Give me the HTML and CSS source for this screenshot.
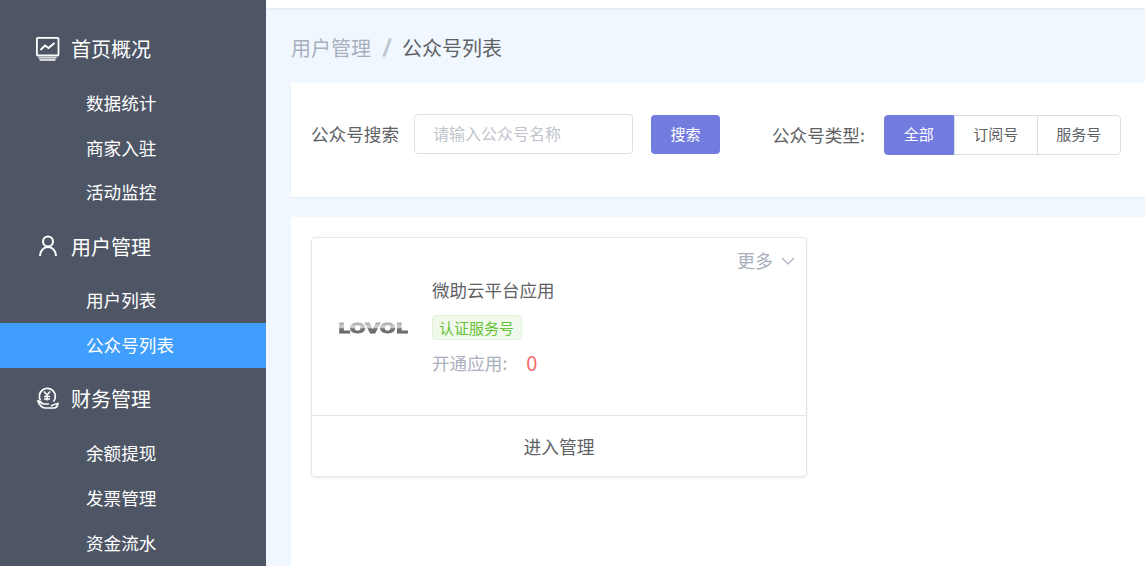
FILE: index.html
```html
<!DOCTYPE html>
<html lang="zh-CN">
<head>
<meta charset="utf-8">
<title>公众号列表</title>
<link rel="stylesheet" href="styles.css">
</head>
<body>
<div class="app">
  <aside class="sidebar">
    <div class="group-title">
      <svg class="nav-icon" viewBox="0 0 24 24" fill="none" stroke="#fff" stroke-width="1.8"><rect x="0.900" y="0.900" width="21.600" height="17.600" rx="1"/><path d="M4.500 13l4.500-4.500 3.500 2.500 6-5" stroke-width="1.900"/><path d="M2.500 20.900h18M3.500 23h16" stroke-width="1.300"/></svg>
      <span>首页概况</span>
    </div>
    <a class="sub">数据统计</a>
    <a class="sub">商家入驻</a>
    <a class="sub">活动监控</a>
    <div class="group-title">
      <svg class="nav-icon" viewBox="0 0 24 24" fill="none" stroke="#fff" stroke-width="2"><circle cx="12" cy="7.500" r="5"/><path d="M4 22c0-5 3.500-9 8-9s8 4 8 9"/></svg>
      <span>用户管理</span>
    </div>
    <a class="sub">用户列表</a>
    <a class="sub active">公众号列表</a>
    <div class="group-title">
      <svg class="nav-icon" viewBox="0 0 24 24" fill="none" stroke="#fff" stroke-width="1.700"><path d="M4.500 13.500A8 8 0 1 1 17.500 14.500"/><path d="M1.500 13.500c2.500 0 4 3.500 6.500 3.500h5M1.500 13.500C3 17 5 21 9 21h9c2 0 3.500-2 4-4.500-2 0-4 1-7 2.500"/><path d="M8 4.500l3 3.500 3-3.500M11 8v5.500M8 9.500h6M8 12h6" stroke-width="1.500"/></svg>
      <span>财务管理</span>
    </div>
    <a class="sub">余额提现</a>
    <a class="sub">发票管理</a>
    <a class="sub">资金流水</a>
  </aside>

  <div class="content">
    <div class="topbar"></div>
    <main class="main">
      <nav class="crumbs">
        <span class="crumb-parent">用户管理</span>
        <span class="crumb-sep">/</span>
        <span class="crumb-current">公众号列表</span>
      </nav>

      <section class="search-panel">
        <label class="field-label">公众号搜索</label>
        <div class="input">请输入公众号名称</div>
        <button class="search-btn">搜索</button>
        <label class="type-label">公众号类型:</label>
        <div class="type-group">
          <span class="type-opt selected">全部</span>
          <span class="type-opt">订阅号</span>
          <span class="type-opt">服务号</span>
        </div>
      </section>

      <section class="list-panel">
        <article class="card">
          <div class="card-body">
            <div class="more">
              <span>更多</span>
              <svg class="chevron" viewBox="0 0 14 8" fill="none" stroke="#a9b0bd" stroke-width="1.200"><path d="M1 1l6 6 6-6"/></svg>
            </div>
            <div class="logo">
              <svg viewBox="0 0 72 14" width="72" height="14">
                <defs>
                  <linearGradient id="chrome" x1="0" y1="0" x2="0" y2="1">
                    <stop offset="0" stop-color="#8a8a8a"/>
                    <stop offset="0.45" stop-color="#d6d6d6"/>
                    <stop offset="0.55" stop-color="#777"/>
                    <stop offset="1" stop-color="#5c5c5c"/>
                  </linearGradient>
                </defs>
                <text class="logo-text" x="36" y="12" text-anchor="middle" textLength="70" lengthAdjust="spacingAndGlyphs" fill="url(#chrome)" stroke="url(#chrome)" stroke-width="0.800">LOVOL</text>
              </svg>
            </div>
            <div class="info">
              <div class="name">微助云平台应用</div>
              <span class="tag">认证服务号</span>
              <div class="apps"><span class="apps-label">开通应用:</span><span class="apps-count">0</span></div>
            </div>
          </div>
          <div class="card-foot">进入管理</div>
        </article>
      </section>
    </main>
  </div>
</div>
</body>
</html>
```

FILE: styles.css
```css
* { box-sizing: border-box; }
html, body { margin: 0; height: 100%; overflow: hidden; }
body {
  font-family: "Noto Sans CJK SC", "Noto Sans", sans-serif;
  background: #f0f7ff;
  color: #606266;
}
.app { display: flex; height: 566px; }

.sidebar {
  width: 266px;
  flex: none;
  background: #4e5666;
  padding-top: 17.5px;
  overflow: hidden;
  color: #fff;
}
.group-title {
  display: flex;
  align-items: center;
  height: 63.25px;
  padding: 0 0 1px 36px;
  font-size: 20px;
  gap: 11px;
}
.nav-icon { width: 24px; height: 24px; flex: none; }
.sub {
  display: flex;
  align-items: center;
  height: 44.75px;
  padding: 0 0 1.5px 86px;
  font-size: 17.6px;
}
.sub.active { background: #409eff; padding-bottom: 1px; }

.content { flex: 1; min-width: 0; display: flex; flex-direction: column; }
.topbar {
  height: 8px;
  background: #fff;
  box-shadow: 0 1px 3px rgba(0, 0, 0, 0.08);
  flex: none;
}
.main {
  flex: 1;
  display: flex;
  flex-direction: column;
  padding-left: 25px;
  min-height: 0;
}
.crumbs {
  height: 75px;
  flex: none;
  display: flex;
  align-items: center;
  padding-top: 4px;
  font-size: 20px;
}
.crumb-parent { color: #a9b0bd; }
.crumb-sep {
  display: inline-block;
  color: #c0c4cc;
  font-family: "Liberation Sans", sans-serif;
  font-weight: 700;
  font-size: 24px;
  line-height: 1;
  margin: 0 11px;
  width: 10px;
  text-align: center;
  transform: skewX(-10deg);
}
.crumb-current { color: #606266; margin-left: -1px; }

.search-panel {
  height: 114px;
  flex: none;
  background: #fff;
  box-shadow: 0 1px 2px rgba(0, 0, 0, 0.05);
  display: flex;
  align-items: flex-start;
  padding: 31px 0 0 20px;
}
.field-label, .type-label {
  font-size: 17.6px;
  line-height: 39px;
  color: #606266;
}
.input {
  width: 219px;
  height: 40px;
  margin-left: 15px;
  padding-left: 18px;
  border: 1px solid #dcdfe6;
  border-radius: 4px;
  font-size: 16px;
  line-height: 36px;
  color: #c0c4cc;
}
.search-btn {
  width: 69px;
  height: 39px;
  margin: 1px 0 0 18px;
  border: 0;
  border-radius: 4px;
  background: #727cdf;
  color: #fff;
  font: inherit;
  font-size: 15px;
  padding: 0 0 2px;
}
.type-label { margin-left: 52px; line-height: 42px; }
.type-group {
  display: flex;
  height: 40px;
  margin-left: 19px;
  margin-top: 1px;
}
.type-opt {
  height: 40px;
  width: 84px;
  border: 1px solid #dcdfe6;
  font-size: 15px;
  line-height: 36px;
  text-align: center;
  color: #606266;
}
.type-opt:last-child { margin-left: -1px; border-radius: 0 4px 4px 0; }
.type-opt.selected {
  width: 70px;
  background: #727cdf;
  border-color: #727cdf;
  color: #fff;
  border-radius: 4px 0 0 4px;
}

.list-panel {
  flex: 1;
  margin-top: 20px;
  background: #fff;
  padding: 20px;
}
.card {
  width: 496px;
  height: 240px;
  background: #fff;
  border: 1px solid #e4e7ed;
  border-radius: 4px;
  box-shadow: 0 1px 3px rgba(0, 0, 0, 0.08);
  display: flex;
  flex-direction: column;
}
.card-body {
  position: relative;
  height: 178px;
  flex: none;
  display: flex;
  align-items: flex-start;
  border-bottom: 1px solid #e4e7ed;
}
.more {
  position: absolute;
  top: 9px;
  right: 11px;
  display: flex;
  align-items: center;
  gap: 8px;
  font-size: 18px;
  color: #a9b0bd;
}
.chevron { width: 14px; height: 8px; margin-top: 2px; }
.logo { width: 72px; height: 14px; margin: 83px 0 0 25px; flex: none; }
.logo svg { display: block; filter: blur(0.3px); }
.logo-text {
  font-family: "DejaVu Sans", sans-serif;
  font-weight: 700;
  font-size: 14px;
}
.info { margin-left: 23px; padding-top: 37px; }
.name { font-size: 17.5px; line-height: 30px; color: #606266; }
.tag {
  display: inline-block;
  height: 25px;
  margin-top: 10px;
  padding: 0 7px 0 6px;
  border: 1px solid #e1f3d8;
  border-radius: 4px;
  background: #f0f9eb;
  color: #67c23a;
  font-size: 15px;
  line-height: 23px;
}
.apps { display: flex; align-items: center; margin-top: 4px; height: 36px; }
.apps-label { font-size: 17.6px; color: #a9b0bd; }
.apps-count { font-size: 20px; color: #f56c6c; margin-left: 19px; }
.card-foot {
  flex: 1;
  display: flex;
  align-items: center;
  justify-content: center;
  padding-bottom: 1px;
  font-size: 17.8px;
  color: #606266;
}
```
